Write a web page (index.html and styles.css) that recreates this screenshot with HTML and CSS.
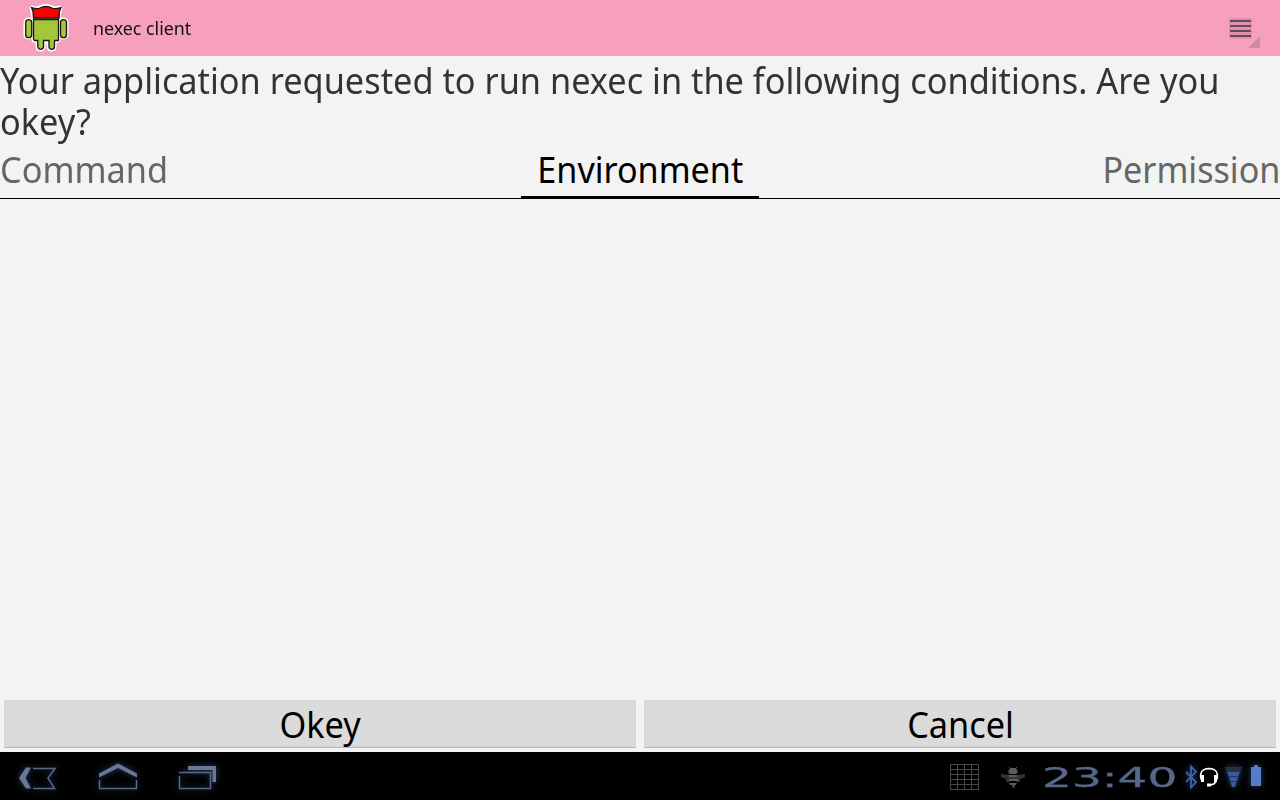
FILE: index.html
```html
<!DOCTYPE html>
<html lang="en">
<head>
<meta charset="utf-8">
<title>nexec client</title>
<link rel="stylesheet" href="styles.css">
</head>
<body>
<div class="screen">
  <header class="action-bar">
    <svg class="app-icon" width="48" height="50" viewBox="22 3 48 50">
      <g stroke="#fff" stroke-width="5" stroke-linejoin="round" fill="#fff">
        <path d="M32 8Q37 10 40 8Q46 5 52 8Q55 10 60 8L58 18H34Z"/>
        <path d="M34 19H58V40H54V46Q54 49 51.500 49T49 46V41H43V46Q43 49 40.500 49T38 46V40H34Z"/>
        <rect x="26" y="20" width="5" height="17" rx="2.500"/><rect x="61" y="20" width="5" height="17" rx="2.500"/>
      </g>
      <g stroke="#151515" stroke-width="1.300">
        <path fill="#f00" d="M31.500 7.500Q37 9.500 40 8Q46 5 52 8Q55 9.500 61 7.500Q58.500 12 59 18H33.500Q34 12 31.500 7.500Z"/>
        <path fill="#a4c639" d="M33.500 19.500H58.500V40.500H54.500V46.500Q54.500 49.300 51.800 49.300T49 46.500V40.500H43.500V46.500Q43.500 49.300 40.700 49.300T37.800 46.500V40.500H35Q33.500 40.500 33.500 39Z"/>
        <rect fill="#a4c639" x="25.700" y="19.700" width="6" height="18" rx="3"/><rect fill="#a4c639" x="60.500" y="19.700" width="6" height="18" rx="3"/>
      </g>
    </svg>
    <h1 class="app-title"><span class="fit fit-title">nexec client</span></h1>
    <svg class="menu-icon" width="36" height="34" viewBox="1226 15 36 34">
      <rect x="1229" y="18" width="23" height="21" rx="1.500" fill="#d98ba5" opacity=".75"/>
      <path stroke="#66485a" stroke-width="2" d="M1230 21H1251M1230 26H1251M1230 31H1251M1230 36H1251"/>
      <path fill="#d08aa3" d="M1260 36V48H1248Z"/>
    </svg>
  </header>
  <p class="message"><span class="fit">Your application requested to run nexec in the following conditions. Are you</span><br><span class="fit">okey?</span></p>
  <nav class="tabs">
    <span class="tab tab-left"><span class="fit">Command</span></span>
    <span class="tab tab-active"><span class="fit">Environment</span></span>
    <span class="tab tab-right"><span class="fit">Permission</span></span>
  </nav>
  <main class="page"></main>
  <div class="buttons">
    <button class="button"><span class="fit">Okey</span></button>
    <button class="button"><span class="fit">Cancel</span></button>
  </div>
  <footer class="system-bar">
    <svg class="nav-icons" width="240" height="48" viewBox="0 752 240 48">
      <g class="glow" stroke="#5b6885" fill="none" stroke-width="1.500">
        <path fill="#6b7894" stroke="none" d="M26 767.500H31L25.500 778L31 788.500H26L19 778Z"/>
        <path d="M33 768.500H55L48 778L54.500 788.500H33"/>
        <path fill="#6b7894" stroke="none" d="M99 773.500L118 763.500L137 773.500V777.500L118 768L99 777.500Z"/>
        <path d="M99.500 780V788.500H136.500V780"/>
        <path fill="#6b7894" stroke="none" d="M188 766H216V782H212.500V770H188Z"/>
        <path d="M179 772.500H210.500V788.500H179.500V776"/>
      </g>
    </svg>
    <div class="status">
      <svg width="78" height="48" viewBox="948 752 78 48">
        <path fill="none" stroke="#484848" d="M950.500 764.500H978.500V789.500H950.500ZM957.500 764V790M964.500 764V790M971.500 764V790M950 769.500H979M950 774.500H979M950 779.500H979M950 784.500H979"/>
        <path fill="#333" d="M1001 774L1009 775L1013 777L1017 775L1025 774V777L1020 779V782H1017L1014 779H1012L1009 782H1006V779L1001 777Z"/>
        <path fill="#5b5b5b" d="M1010 768H1016L1018 772L1016 774H1010L1008 772ZM1009 775H1017V777H1009ZM1009 779H1018V781H1009ZM1009 783H1017L1016 785H1010ZM1012 785H1015L1013.500 789Z"/>
        <path fill="none" stroke="#555" d="M1010 768L1009 767M1016 768L1017 767"/>
      </svg>
      <span class="clock"><span class="clock-text">23:40</span></span>
      <svg width="96" height="48" viewBox="1180 752 96 48">
        <g class="glow">
          <path fill="none" stroke="#3f64a8" stroke-width="1.800" d="M1186 772L1196 782L1191 787.500V766.500L1196 771.500L1186 782"/>
          <path fill="#2b3040" d="M1225 767H1242L1240.500 771H1226.500Z"/>
          <path fill="#3a5a9c" d="M1227 771H1240L1235 787H1232Z"/>
          <path stroke="#20345c" d="M1227 771.500H1240M1228 776.500H1239M1230 781.500H1237"/>
          <path fill="#567bc8" d="M1251 767H1254V765H1258V767H1261V786H1251Z"/>
        </g>
        <g fill="none" stroke="#fff" stroke-width="1.700">
          <path d="M1202.500 781Q1200 779 1200.800 774C1201.500 766.800 1216.500 766.800 1217.200 774Q1218 779 1215.500 781M1216 781Q1215 784.500 1210 785"/>
          <path stroke-width="3" d="M1202.500 775V782M1215.500 775V782M1207 785H1211"/>
        </g>
      </svg>
    </div>
  </footer>
</div>
</body>
</html>
```
FILE: styles.css
```css
* { box-sizing: border-box; }
body { margin: 0; font-family: "Noto Sans", "Open Sans", sans-serif; background: #f3f3f3; }
.screen { width: 1280px; height: 800px; display: flex; flex-direction: column; overflow: hidden; }
.action-bar { height: 56px; flex: none; background: #f6a0bc; display: flex; align-items: center; padding: 0 18px 0 22px; }
.app-title { margin: 0 0 0 23px; font-size: 18px; font-weight: 400; line-height: 22px; color: #111; flex: 1; }
.menu-icon { margin-top: 8px; }
.fit { display: inline-block; white-space: nowrap; transform: scaleX(.953); transform-origin: 0 50%; }
.fit-title { transform: scaleX(.99); }
.message { margin: 0; height: 88px; flex: none; padding: 4px 0 0; font-size: 36px; line-height: 41px; color: #333; }
.tabs { height: 55px; flex: none; display: grid; grid-template-columns: 1fr 238px 1fr; border-bottom: 1px solid #000; font-size: 36px; line-height: 42px; color: #666; }
.tab { padding-top: 5px; height: 54px; }
.tab-active { height: 55px; color: #000; text-align: center; border-bottom: 3px solid #000; }
.tab-right { text-align: right; }
.tab-active .fit { transform: translateX(.7px) scaleX(.948); transform-origin: 50% 50%; }
.tab-right .fit { transform: translateX(.7px) scaleX(.948); transform-origin: 100% 50%; }
.page { flex: 1; }
.buttons { display: grid; grid-template-columns: 1fr 1fr; gap: 8px; padding: 0 4px 4px; height: 52px; flex: none; }
.button { height: 48px; border: 0; border-bottom: 1px solid #b8b8b8; padding: 2px 0 0; background: #dbdbdb; font: 36px/42px "Noto Sans", "Open Sans", sans-serif; color: #000; box-shadow: inset 0 0 0 1px #d7d7d7; }
.button .fit { transform: translateX(.5px) scaleX(.953); transform-origin: 50% 50%; }
.system-bar { height: 48px; flex: none; background: #000; display: flex; justify-content: space-between; }
.glow { filter: drop-shadow(0 0 3px #28436f); }
.status { display: flex; padding-right: 4px; }
.clock { width: 154px; padding: 0 0 0 16px; color: #57678c; font: 27px/52px "DejaVu Sans", sans-serif; white-space: nowrap; }
.clock-text { display: inline-block; transform: scaleX(1.74); transform-origin: 0 50%; -webkit-text-stroke: .3px #57678c; }
```
